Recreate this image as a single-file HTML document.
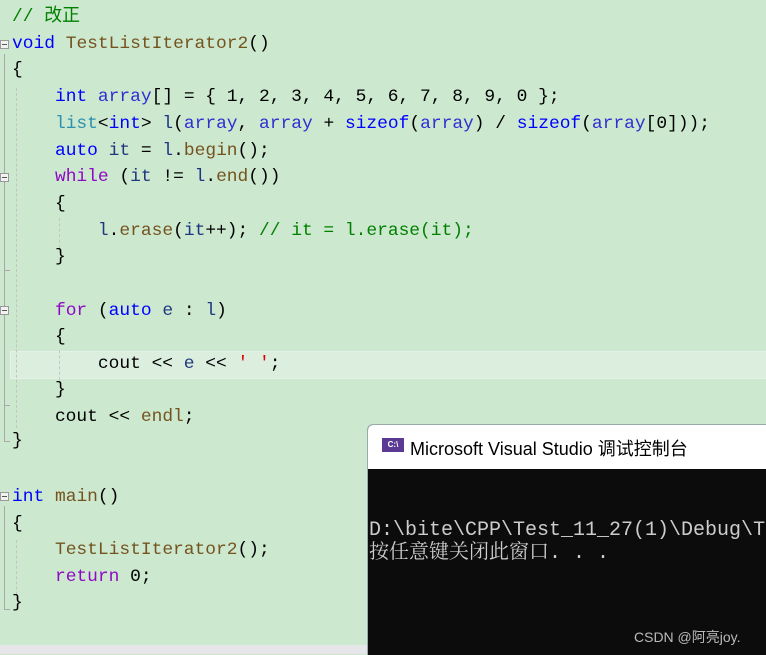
<!DOCTYPE html>
<html><head><meta charset="utf-8"><style>
body{margin:0;width:766px;height:654px;overflow:hidden;background:#cce8cf;position:relative;font-family:"Liberation Mono","Noto Sans CJK SC",monospace;}
.l{position:absolute;left:12px;font-size:17.9px;white-space:pre;line-height:20px;color:#000;}
.k{color:#0000ff}.f{color:#74531f}.v{color:#1f377f}.a{color:#2f2fd0}.t{color:#2b91af}.p{color:#8f08c4}.c{color:#008000}.s{color:#e00000}
.fold{position:absolute;left:0;width:7px;height:7px;border:1px solid #999;background:#f2f2f2;}
.fold:after{content:"";position:absolute;left:1px;top:3px;width:5px;height:1px;background:#555}
.vl{position:absolute;left:4px;width:1px;background:#a8a8a8}
.gl{position:absolute;border-left:1px dashed #c4c4c4;}
</style></head><body>
<div style="position:absolute;left:10px;top:351px;width:756px;height:26px;background:#dcefdf;border:1px solid #e6f2e8"></div>
<div class="vl" style="top:54px;height:388px"></div>
<div class="vl" style="top:506px;height:103px"></div>
<div style="position:absolute;left:4px;top:270px;width:6px;height:1px;background:#a8a8a8"></div>
<div style="position:absolute;left:4px;top:405px;width:6px;height:1px;background:#a8a8a8"></div>
<div style="position:absolute;left:4px;top:441px;width:6px;height:1px;background:#a8a8a8"></div>
<div style="position:absolute;left:4px;top:609px;width:6px;height:1px;background:#a8a8a8"></div>
<div class="gl" style="left:16px;top:88px;height:340px"></div>
<div class="gl" style="left:59px;top:218px;height:30px"></div>
<div class="gl" style="left:59px;top:350px;height:30px"></div>
<div class="gl" style="left:16px;top:540px;height:60px"></div>
<div class="fold" style="top:40px"></div>
<div class="fold" style="top:173px"></div>
<div class="fold" style="top:306px"></div>
<div class="fold" style="top:492px"></div>

<div class="l c" style="top:7px">// 改正</div>
<div class="l" style="top:34px"><span class="k">void</span> <span class="f">TestListIterator2</span>()</div>
<div class="l" style="top:60px">{</div>
<div class="l" style="top:87px">    <span class="k">int</span> <span class="a">array</span>[] = { 1, 2, 3, 4, 5, 6, 7, 8, 9, 0 };</div>
<div class="l" style="top:114px">    <span class="t">list</span>&lt;<span class="k">int</span>&gt; <span class="v">l</span>(<span class="a">array</span>, <span class="a">array</span> + <span class="k">sizeof</span>(<span class="a">array</span>) / <span class="k">sizeof</span>(<span class="a">array</span>[0]));</div>
<div class="l" style="top:141px">    <span class="k">auto</span> <span class="v">it</span> = <span class="v">l</span>.<span class="f">begin</span>();</div>
<div class="l" style="top:167px">    <span class="p">while</span> (<span class="v">it</span> != <span class="v">l</span>.<span class="f">end</span>())</div>
<div class="l" style="top:194px">    {</div>
<div class="l" style="top:221px">        <span class="v">l</span>.<span class="f">erase</span>(<span class="v">it</span>++); <span class="c">// it = l.erase(it);</span></div>
<div class="l" style="top:247px">    }</div>
<div class="l" style="top:301px">    <span class="p">for</span> (<span class="k">auto</span> <span class="v">e</span> : <span class="v">l</span>)</div>
<div class="l" style="top:327px">    {</div>
<div class="l" style="top:354px">        cout &lt;&lt; <span class="v">e</span> &lt;&lt; <span class="s">' '</span>;</div>
<div class="l" style="top:380px">    }</div>
<div class="l" style="top:407px">    cout &lt;&lt; <span class="f">endl</span>;</div>
<div class="l" style="top:431px">}</div>
<div class="l" style="top:487px"><span class="k">int</span> <span class="f">main</span>()</div>
<div class="l" style="top:514px">{</div>
<div class="l" style="top:540px">    <span class="f">TestListIterator2</span>();</div>
<div class="l" style="top:567px">    <span class="p">return</span> 0;</div>
<div class="l" style="top:593px">}</div>

<div style="position:absolute;left:0;top:645px;width:369px;height:9px;background:#e6e6ea"></div>

<div style="position:absolute;left:367px;top:424px;width:399px;height:230px;background:#0c0c0c;border-left:1px solid #9aa;border-top:1px solid #9aa;border-radius:6px 0 0 0;overflow:hidden">
 <div style="height:44px;background:#fff;position:relative">
  <div style="position:absolute;left:14px;top:13px;width:22px;height:14px;background:#5b3a93;color:#fff;font:bold 8px 'Liberation Sans',sans-serif;line-height:14px;text-align:center">C:\</div>
  <div style="position:absolute;left:42px;top:10px;font:18px 'Liberation Sans','Noto Sans CJK SC',sans-serif;color:#000;white-space:nowrap">Microsoft Visual Studio 调试控制台</div>
 </div>
 <div style="position:absolute;left:1px;top:94px;color:#ccc;font:20px 'Liberation Mono','Noto Serif CJK SC',monospace;white-space:pre;line-height:23px">D:\bite\CPP\Test_11_27(1)\Debug\T
按任意键关闭此窗口. . .</div>
 <div style="position:absolute;left:266px;top:202px;color:#bbb;font:14px 'Liberation Sans','Noto Sans CJK SC',sans-serif;white-space:nowrap">CSDN @阿亮joy.</div>
</div>
</body></html>
